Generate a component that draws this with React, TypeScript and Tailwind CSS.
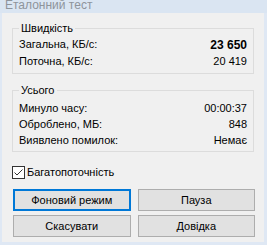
import React from 'react';

const font = { fontFamily: '"Liberation Sans", Arial, sans-serif' };

function Row({ label, value, bold, h }: { label: string; value: string; bold?: boolean; h: string }) {
  return (
    <div className={`flex items-center justify-between ${h}`}>
      <span>{label}</span>
      <span className={bold ? 'text-[12px] font-bold' : ''}>{value}</span>
    </div>
  );
}

function Group({ title, children, className }: { title: string; children: React.ReactNode; className?: string }) {
  return (
    <fieldset className={`mx-[10px] border border-[#dcdcdc] px-[6px] pb-[3px] ${className ?? ''}`}>
      <legend className="ml-[0px] h-[14px] px-[2px] leading-[14px]">{title}</legend>
      {children}
    </fieldset>
  );
}

function Button({ label, primary }: { label: string; primary?: boolean }) {
  return (
    <button
      className={`h-[22px] bg-[#e1e1e1] text-[11px] text-black ${
        primary ? 'border-2 border-[#0078d7]' : 'border border-[#adadad]'
      }`}>
      {label}
    </button>
  );
}

export default function App() {
  return (
    <div className="flex h-[245px] w-[267px] flex-col bg-[#dfe8f4] text-[11px] text-black" style={font}>
      {/* title bar, cut at the top */}
      <div className="h-[13px] overflow-hidden bg-[#dae5f2] pl-[5px]">
        <div className="mt-[-1px] text-[12px] leading-[12px] text-[#8e949b]">Еталонний тест</div>
      </div>

      <div className="ml-[2px] mr-[3px] h-[229px] bg-[#f0f0f0] pt-[8px]">
        <Group title="Швидкість">
          <div className="mt-[1px]">
            <Row label="Загальна, КБ/с:" value="23 650" bold h="h-[17px]" />
            <Row label="Поточна, КБ/с:" value="20 419" h="h-[17px]" />
          </div>
        </Group>

        <Group title="Усього" className="mt-[9px]">
          <div className="mt-[3px]">
            <Row label="Минуло часу:" value="00:00:37" h="h-[16px]" />
            <Row label="Оброблено, МБ:" value="848" h="h-[16px]" />
            <Row label="Виявлено помилок:" value="Немає" h="h-[16px]" />
          </div>
        </Group>

        <label className="ml-[10px] mt-[12px] flex h-[16px] items-center gap-[2px]">
          <span className="flex h-[13px] w-[13px] items-center justify-center border border-[#333333] bg-white">
            <svg width="11" height="11" viewBox="0 0 11 11" fill="none">
              <path d="M1.5 5.5 L4 8 L9.5 2.5" stroke="#333333" strokeWidth="1" />
            </svg>
          </span>
          <span>Багатопоточність</span>
        </label>

        <div className="ml-[11px] mt-[9px] grid w-[242px] grid-cols-2 gap-x-[7px] gap-y-[4px]">
          <Button label="Фоновий режим" primary />
          <Button label="Пауза" />
          <Button label="Скасувати" />
          <Button label="Довідка" />
        </div>
      </div>
    </div>
  );
}
